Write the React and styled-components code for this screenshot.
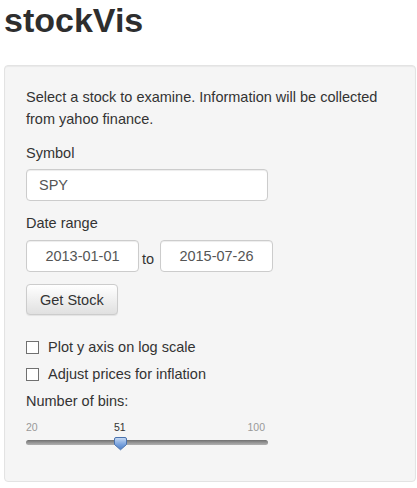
import React, { useState } from 'react';
import styled, { createGlobalStyle } from 'styled-components';

const GlobalStyle = createGlobalStyle`
  body {
    margin: 0;
    background: #fff;
    font-family: "Liberation Sans", Arial, Helvetica, sans-serif;
    font-size: 14.5px;
    line-height: 22px;
    color: #333;
  }
  * {
    box-sizing: border-box;
  }
`;

const Page = styled.div`
  padding: 0 1px 0 4px;
`;

const Title = styled.h2`
  margin: 0;
  font-size: 34px;
  line-height: 40px;
  font-weight: bold;
  color: #2e2e2e;
`;

const Well = styled.div`
  margin-top: 25px;
  height: 417px;
  padding: 20px 20px 0 21px;
  background-color: #f5f5f5;
  border: 1px solid #e3e3e3;
  border-radius: 4px;
  box-shadow: inset 0 1px 1px rgba(0, 0, 0, 0.05);
`;

const Intro = styled.p`
  margin: 0;
`;

const FormGroup = styled.div`
  margin-top: ${(p) => p.$top || 11}px;
`;

const Label = styled.label`
  display: block;
  margin-bottom: ${(p) => p.$gap || 5}px;
`;

const TextInput = styled.input`
  display: block;
  width: ${(p) => p.$width || 242}px;
  height: 32px;
  padding: 6px 12px;
  font-family: inherit;
  font-size: 14.5px;
  line-height: 20px;
  color: #555;
  background-color: #fff;
  border: 1px solid #ccc;
  border-radius: 4px;
  box-shadow: inset 0 1px 1px rgba(0, 0, 0, 0.075);
  text-align: ${(p) => (p.$center ? 'center' : 'left')};
  outline: none;
`;

const DateRow = styled.div`
  display: flex;
  align-items: center;
`;

const RangeWord = styled.span`
  width: 21px;
  padding-left: 3px;
  margin-top: 6px;
`;

const Button = styled.button`
  display: block;
  margin-top: 12px;
  height: 31px;
  padding: 0 13px;
  font-family: inherit;
  font-size: 14.5px;
  color: #333;
  background-image: linear-gradient(to bottom, #fff 0%, #e0e0e0 100%);
  border: 1px solid #ccc;
  border-radius: 4px;
  box-shadow: inset 0 1px 0 rgba(255, 255, 255, 0.15), 0 1px 1px rgba(0, 0, 0, 0.075);
  cursor: pointer;
`;

const CheckRow = styled.label`
  display: flex;
  align-items: center;
  gap: 9px;
  margin-top: ${(p) => p.$top}px;
  cursor: pointer;
`;

const Box = styled.input`
  appearance: none;
  width: 13px;
  height: 13px;
  margin: 1px 0 0 0;
  background: #fff;
  border: 1px solid #707070;
  flex: none;

  &:checked {
    box-shadow: inset 0 0 0 2px #fff, inset 0 0 0 6px #333;
  }
`;

const Slider = styled.div`
  position: relative;
  width: 242px;
  height: 46px;
`;

const Tick = styled.span`
  position: absolute;
  top: 6px;
  font-size: 10.5px;
  line-height: 12px;
  color: ${(p) => (p.$value ? '#333' : '#999')};
`;

const Track = styled.div`
  position: absolute;
  left: 0;
  right: 0;
  top: 25px;
  height: 5px;
  border-radius: 3px;
  background: linear-gradient(to bottom, #6f6f6f 0%, #9a9a9a 60%, #b0b0b0 100%);
`;

const Handle = styled.svg`
  position: absolute;
  top: 21px;
  width: 15px;
  height: 15px;
  margin-left: -7px;
`;

const MIN = 20;
const MAX = 100;

const BinsSlider = ({ value }) => {
  const pct = ((value - MIN) / (MAX - MIN)) * 100;
  return (
    <Slider>
      <Tick style={{ left: 0 }}>{MIN}</Tick>
      <Tick $value style={{ left: `${pct}%`, transform: 'translateX(-50%)' }}>
        {value}
      </Tick>
      <Tick style={{ right: 3 }}>{MAX}</Tick>
      <Track />
      <Handle viewBox="0 0 15 15" style={{ left: `${pct}%` }}>
        <defs>
          <linearGradient id="hg" x1="0" y1="0" x2="0" y2="1">
            <stop offset="0" stopColor="#c9dcf5" />
            <stop offset="0.55" stopColor="#7aa3de" />
            <stop offset="1" stopColor="#4d7fc8" />
          </linearGradient>
        </defs>
        <path
          d="M3 1.5 H12 Q13.5 1.5 13.5 3 V8.5 L7.5 13.8 L1.5 8.5 V3 Q1.5 1.5 3 1.5 Z"
          fill="url(#hg)"
          stroke="#4a72ad"
          strokeWidth="1"
        />
      </Handle>
    </Slider>
  );
};

const App = () => {
  const [symbol, setSymbol] = useState('SPY');
  const [from, setFrom] = useState('2013-01-01');
  const [to, setTo] = useState('2015-07-26');
  const [logScale, setLogScale] = useState(false);
  const [adjust, setAdjust] = useState(false);

  return (
    <Page>
      <GlobalStyle />
      <Title>stockVis</Title>
      <Well>
        <Intro>
          Select a stock to examine. Information will be collected from yahoo finance.
        </Intro>

        <FormGroup $top={12}>
          <Label htmlFor="symbol">Symbol</Label>
          <TextInput id="symbol" value={symbol} onChange={(e) => setSymbol(e.target.value)} />
        </FormGroup>

        <FormGroup $top={11}>
          <Label $gap={6}>Date range</Label>
          <DateRow>
            <TextInput $width={113} $center value={from} onChange={(e) => setFrom(e.target.value)} />
            <RangeWord>to</RangeWord>
            <TextInput $width={113} $center value={to} onChange={(e) => setTo(e.target.value)} />
          </DateRow>
        </FormGroup>

        <Button type="button">Get Stock</Button>

        <CheckRow $top={21}>
          <Box type="checkbox" checked={logScale} onChange={(e) => setLogScale(e.target.checked)} />
          Plot y axis on log scale
        </CheckRow>
        <CheckRow $top={5}>
          <Box type="checkbox" checked={adjust} onChange={(e) => setAdjust(e.target.checked)} />
          Adjust prices for inflation
        </CheckRow>

        <FormGroup $top={5}>
          <Label $gap={3}>Number of bins:</Label>
          <BinsSlider value={51} />
        </FormGroup>
      </Well>
    </Page>
  );
};

export default App;
